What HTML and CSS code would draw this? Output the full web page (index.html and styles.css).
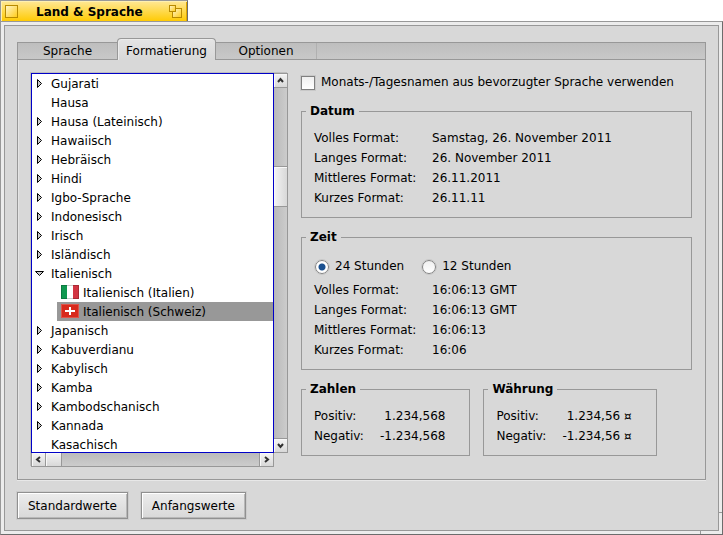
FILE: index.html
```html
<!DOCTYPE html>
<html lang="de">
<head>
<meta charset="utf-8">
<title>Land &amp; Sprache</title>
<link rel="stylesheet" href="styles.css">
</head>
<body>
<div class="window">
  <header class="title-tab">
    <button class="title-button" type="button" aria-label="Schließen">
      <svg width="13" height="13" viewBox="0 0 13 13"><defs><linearGradient id="gold" x1="0" y1="0" x2="1" y2="1"><stop offset="0" stop-color="#fff6cf"/><stop offset="1" stop-color="#ffcb14"/></linearGradient></defs><rect x=".5" y=".5" width="12" height="12" fill="url(#gold)" stroke="#b88a00"/></svg>
    </button>
    <h1 class="title">Land &amp; Sprache</h1>
    <button class="title-button" type="button" aria-label="Zoomen">
      <svg width="13" height="13" viewBox="0 0 13 13"><rect x="3.500" y="3.500" width="9" height="9" fill="url(#gold)" stroke="#b88a00"/><rect x=".5" y=".5" width="6" height="6" fill="url(#gold)" stroke="#b88a00"/></svg>
    </button>
  </header>
  <div class="frame">
    <main class="content">
      <div class="tabs" role="tablist">
        <button class="tab" type="button" role="tab">Sprache</button>
        <button class="tab tab-active" type="button" role="tab" aria-selected="true">Formatierung</button>
        <button class="tab" type="button" role="tab">Optionen</button>
        <span class="tab-rest"></span>
      </div>
      <section class="panel">
        <div class="list-view">
          <ul class="list">
            <li class="row"><svg class="arrow" viewBox="0 0 11 11"><path d="M3.500 1.500v8l4-4z"/></svg>Gujarati</li>
            <li class="row leaf">Hausa</li>
            <li class="row"><svg class="arrow" viewBox="0 0 11 11"><path d="M3.500 1.500v8l4-4z"/></svg>Hausa (Lateinisch)</li>
            <li class="row"><svg class="arrow" viewBox="0 0 11 11"><path d="M3.500 1.500v8l4-4z"/></svg>Hawaiisch</li>
            <li class="row"><svg class="arrow" viewBox="0 0 11 11"><path d="M3.500 1.500v8l4-4z"/></svg>Hebräisch</li>
            <li class="row"><svg class="arrow" viewBox="0 0 11 11"><path d="M3.500 1.500v8l4-4z"/></svg>Hindi</li>
            <li class="row"><svg class="arrow" viewBox="0 0 11 11"><path d="M3.500 1.500v8l4-4z"/></svg>Igbo-Sprache</li>
            <li class="row"><svg class="arrow" viewBox="0 0 11 11"><path d="M3.500 1.500v8l4-4z"/></svg>Indonesisch</li>
            <li class="row"><svg class="arrow" viewBox="0 0 11 11"><path d="M3.500 1.500v8l4-4z"/></svg>Irisch</li>
            <li class="row"><svg class="arrow" viewBox="0 0 11 11"><path d="M3.500 1.500v8l4-4z"/></svg>Isländisch</li>
            <li class="row"><svg class="arrow" viewBox="0 0 11 11"><path d="M1.500 3.500h8l-4 4z"/></svg>Italienisch</li>
            <li class="row child"><svg class="flag" viewBox="0 0 18 14"><path fill="#109850" d="M0 0h6v14H0z"/><path fill="#fff" d="M6 0h6v14H6z"/><path fill="#d23442" d="M12 0h6v14h-6z"/><path fill="none" stroke="#000" stroke-opacity=".2" d="M.5.5h17v13H.5z"/></svg>Italienisch (Italien)</li>
            <li class="row child selected"><svg class="flag" viewBox="0 0 18 14"><path fill="#d82a1c" d="M0 0h18v14H0z"/><path fill="#fff" d="M8 3h2v3h4v2h-4v3H8V8H4V6h4z"/><path fill="none" stroke="#fff" stroke-opacity=".2" d="M.5.5h17v13H.5z"/></svg>Italienisch (Schweiz)</li>
            <li class="row"><svg class="arrow" viewBox="0 0 11 11"><path d="M3.500 1.500v8l4-4z"/></svg>Japanisch</li>
            <li class="row"><svg class="arrow" viewBox="0 0 11 11"><path d="M3.500 1.500v8l4-4z"/></svg>Kabuverdianu</li>
            <li class="row"><svg class="arrow" viewBox="0 0 11 11"><path d="M3.500 1.500v8l4-4z"/></svg>Kabylisch</li>
            <li class="row"><svg class="arrow" viewBox="0 0 11 11"><path d="M3.500 1.500v8l4-4z"/></svg>Kamba</li>
            <li class="row"><svg class="arrow" viewBox="0 0 11 11"><path d="M3.500 1.500v8l4-4z"/></svg>Kambodschanisch</li>
            <li class="row"><svg class="arrow" viewBox="0 0 11 11"><path d="M3.500 1.500v8l4-4z"/></svg>Kannada</li>
            <li class="row leaf">Kasachisch</li>
          </ul>
          <div class="scroll vertical">
            <button class="scroll-button" type="button" aria-label="Nach oben"><svg viewBox="0 0 7 7"><path d="M1 5l2.500-3L6 5"/></svg></button>
            <span class="track-before"></span>
            <span class="thumb"></span>
            <span class="track-after"></span>
            <button class="scroll-button" type="button" aria-label="Nach unten"><svg viewBox="0 0 7 7"><path d="M1 2l2.500 3L6 2"/></svg></button>
          </div>
          <div class="scroll horizontal">
            <button class="scroll-button" type="button" aria-label="Nach links"><svg viewBox="0 0 7 7"><path d="M5 1L2 3.500 5 6"/></svg></button>
            <span class="thumb"></span>
            <span class="track-after"></span>
            <button class="scroll-button" type="button" aria-label="Nach rechts"><svg viewBox="0 0 7 7"><path d="M2 1l3 2.500L2 6"/></svg></button>
          </div>
        </div>
        <form class="settings">
          <label class="option"><input class="check" type="checkbox">Monats-/Tagesnamen aus bevorzugter Sprache verwenden</label>
          <fieldset class="group">
            <legend>Datum</legend>
            <dl class="formats">
              <dt>Volles Format:</dt><dd>Samstag, 26. November 2011</dd>
              <dt>Langes Format:</dt><dd>26. November 2011</dd>
              <dt>Mittleres Format:</dt><dd>26.11.2011</dd>
              <dt>Kurzes Format:</dt><dd>26.11.11</dd>
            </dl>
          </fieldset>
          <fieldset class="group">
            <legend>Zeit</legend>
            <div class="radios">
              <label class="option"><input class="radio" type="radio" name="clock" checked>24 Stunden</label>
              <label class="option"><input class="radio" type="radio" name="clock">12 Stunden</label>
            </div>
            <dl class="formats">
              <dt>Volles Format:</dt><dd>16:06:13 GMT</dd>
              <dt>Langes Format:</dt><dd>16:06:13 GMT</dd>
              <dt>Mittleres Format:</dt><dd>16:06:13</dd>
              <dt>Kurzes Format:</dt><dd>16:06</dd>
            </dl>
          </fieldset>
          <div class="group-row">
            <fieldset class="group">
              <legend>Zahlen</legend>
              <dl class="formats numbers">
                <dt>Positiv:</dt><dd>1.234,568</dd>
                <dt>Negativ:</dt><dd>-1.234,568</dd>
              </dl>
            </fieldset>
            <fieldset class="group">
              <legend>Währung</legend>
              <dl class="formats numbers">
                <dt>Positiv:</dt><dd>1.234,56 ¤</dd>
                <dt>Negativ:</dt><dd>-1.234,56 ¤</dd>
              </dl>
            </fieldset>
          </div>
        </form>
      </section>
      <footer class="actions">
        <button class="action" type="button">Standardwerte</button>
        <button class="action" type="button">Anfangswerte</button>
      </footer>
    </main>
    <span class="resize-corner"></span>
  </div>
</div>
</body>
</html>
```

FILE: styles.css
```css
* {
  box-sizing: border-box;
}

body {
  margin: 0;
  background: #fff;
  color: #000;
  font: 12px/20px "DejaVu Sans", sans-serif;
}

button {
  margin: 0;
  padding: 0;
  border: 0;
  background: none;
  color: inherit;
  font: inherit;
}

svg {
  display: block;
}

.window {
  display: flex;
  flex-direction: column;
  height: 100vh;
}

/* Title tab */
.title-tab {
  display: flex;
  align-items: center;
  align-self: flex-start;
  gap: 18px;
  height: 21px;
  padding: 1px 5px 0 4px;
  border: 1px solid #989898;
  border-right-color: #6c6c6c;
  border-bottom: 0;
  background: linear-gradient(#ffe896, #ffcb05);
  box-shadow: inset 1px 1px #fff0b0, inset -1px 0 #e0a800;
}

.title {
  margin: 0 8px 0 0;
  font-size: 12px;
  line-height: 18px;
}

/* Window frame */
.frame {
  position: relative;
  display: flex;
  flex: 1;
  min-height: 0;
  padding: 3px;
  border: 1px solid #989898;
  border-right-color: #6c6c6c;
  border-bottom-color: #6c6c6c;
  background: #ececec;
}

.content {
  position: relative;
  z-index: 1;
  display: flex;
  flex: 1;
  flex-direction: column;
  min-width: 0;
  padding: 12px 12px 11px;
  border: 1px solid #989898;
  background: #d8d8d8;
}

.resize-corner {
  position: absolute;
  right: 0;
  bottom: 0;
  width: 22px;
  height: 22px;
  border: solid #989898;
  border-width: 1px 0 0 1px;
}

/* Tabs */
.tabs {
  display: flex;
  align-items: flex-end;
}

.tab,
.tab-rest {
  height: 18px;
  border: solid #989898;
  border-width: 1px 0;
  background: linear-gradient(#bebebe, #c8c8c8);
  line-height: 16px;
}

.tab {
  width: 100px;
}

.tab:first-child {
  border-left-width: 1px;
}

.tab-active {
  width: 99px;
  height: 22px;
  padding-top: 2px;
  border-width: 1px 1px 0;
  border-radius: 4px 4px 0 0;
  background: linear-gradient(#e4e4e4, #d8d8d8);
  box-shadow: inset 1px 1px #ececec;
}

.tab-rest {
  flex: 1;
  border-right-width: 1px;
  box-shadow: inset 1px 0 #b0b0b0;
}

/* Panel */
.panel {
  display: grid;
  flex: 1;
  grid-template-columns: 257px 1fr;
  grid-template-rows: minmax(0, 1fr);
  gap: 13px;
  min-height: 0;
  padding: 13px 13px 12px;
  border: solid #989898;
  border-width: 0 1px 1px;
  box-shadow: inset 1px 0 #e4e4e4, 0 1px #e8e8e8;
}

/* Language list */
.list-view {
  display: grid;
  grid-template-columns: 1fr 14px;
  grid-template-rows: minmax(0, 1fr) 14px;
  box-shadow: -1px -1px #bebebe;
}

.list {
  margin: 0;
  padding: 0;
  overflow: hidden;
  border: 1px solid #0000c8;
  background: #fff;
  list-style: none;
}

.row {
  display: flex;
  align-items: flex-start;
  height: 19px;
  padding-left: 2px;
  line-height: 21px;
  white-space: nowrap;
}

.leaf {
  padding-left: 19px;
}

.arrow {
  width: 11px;
  height: 11px;
  margin: 4px 6px 0 0;
  fill: #c8c8c8;
  stroke: #000;
}

.child {
  margin-left: 25px;
  padding-left: 4px;
}

.selected {
  background: #989898;
}

.flag {
  width: 18px;
  height: 14px;
  margin: 2px 4px 0 0;
}

/* Scroll bars */
.scroll {
  display: flex;
  background: #c4c4c4;
}

.vertical {
  flex-direction: column;
  border: solid #989898;
  border-width: 1px 1px 1px 0;
  background: linear-gradient(90deg, #bababa, #cccccc);
}

.horizontal {
  border: solid #989898;
  border-width: 0 1px 1px;
  background: linear-gradient(#bababa, #cccccc);
}

.scroll-button,
.thumb {
  display: grid;
  flex: none;
  place-items: center;
  background: linear-gradient(#f4f4f4, #d8d8d8);
  box-shadow: inset 1px 1px #f8f8f8;
}

.vertical .scroll-button,
.horizontal .scroll-button {
  width: 13px;
  height: 13px;
}

.scroll-button svg {
  width: 7px;
  height: 7px;
  fill: none;
  stroke: #303030;
  stroke-width: 2;
}

.vertical .thumb {
  height: 41px;
  border: solid #989898;
  border-width: 1px 0;
  background: linear-gradient(90deg, #f4f4f4, #d8d8d8);
}

.horizontal .thumb {
  width: 17px;
  border: solid #989898;
  border-width: 0 1px;
}

.track-before {
  flex: 79;
  border-top: 1px solid #989898;
}

.track-after {
  flex: 232;
}

.vertical .track-after {
  border-bottom: 1px solid #989898;
}

.horizontal .track-after {
  border-right: 1px solid #989898;
}

/* Settings */
.settings {
  display: flex;
  flex-direction: column;
  gap: 10px;
  min-width: 0;
}

.option {
  display: flex;
  align-items: center;
  gap: 6px;
  line-height: 19px;
  white-space: nowrap;
}

.check,
.radio {
  flex: none;
  width: 14px;
  height: 14px;
  margin: 0;
  border: 1px solid #808080;
  outline: 1px solid #c8c8c8;
  appearance: none;
  background: linear-gradient(#f0f0f0, #fff);
}

.radio {
  border-radius: 50%;
}

.radio:checked {
  background: radial-gradient(circle, #1a5090 3px, #fff 4px);
}

.group {
  min-width: 0;
  margin: 0;
  padding: 8px 12px 9px 4px;
  border: 1px solid #989898;
}

.group legend {
  padding: 0 4px;
  font-weight: bold;
  line-height: 18px;
}

.formats {
  display: grid;
  grid-template-columns: 118px 1fr;
  margin: 0;
  padding-left: 8px;
  white-space: nowrap;
}

.formats dd {
  margin: 0;
}

.numbers {
  grid-template-columns: 66px auto;
  padding-right: 12px;
}

.numbers dd {
  text-align: right;
}

.radios {
  display: flex;
  gap: 18px;
  padding: 3px 0 4px 9px;
}

.group-row {
  display: flex;
  gap: 13px;
}

/* Buttons */
.actions {
  display: flex;
  gap: 13px;
  padding-top: 12px;
}

.action {
  height: 27px;
  padding: 0 10px;
  border: 1px solid #909090;
  background: linear-gradient(#ececec, #d8d8d8);
  box-shadow: inset 1px 1px #fff, inset -1px -1px #b8b8b8, 0 0 0 1px #cccccc;
  line-height: 24px;
}
```
